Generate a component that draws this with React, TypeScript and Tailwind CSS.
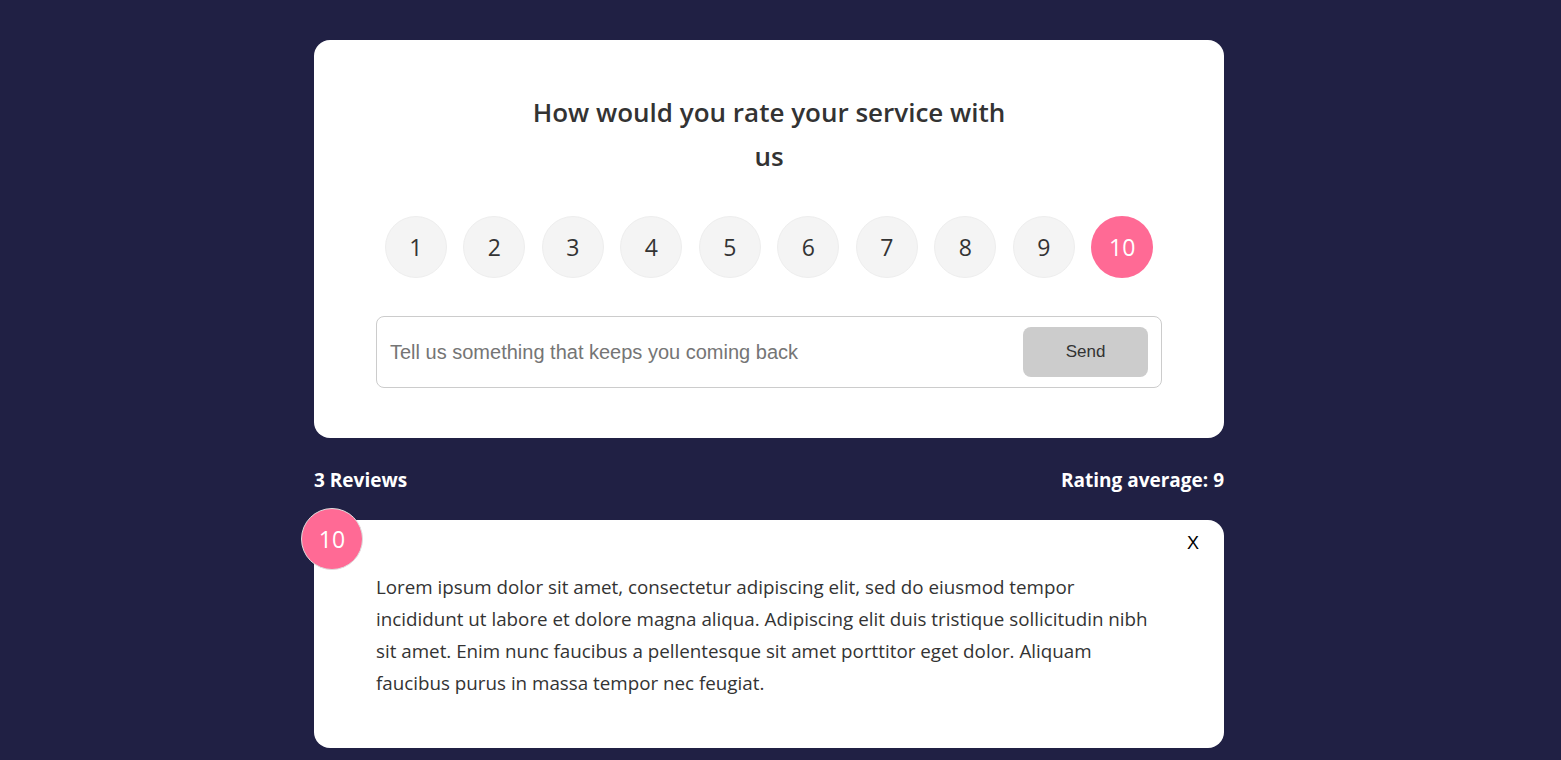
import React from "react";

const reviews = [
  {
    rating: 10,
    text: "Lorem ipsum dolor sit amet, consectetur adipiscing elit, sed do eiusmod tempor incididunt ut labore et dolore magna aliqua. Adipiscing elit duis tristique sollicitudin nibh sit amet. Enim nunc faucibus a pellentesque sit amet porttitor eget dolor. Aliquam faucibus purus in massa tempor nec feugiat.",
  },
  {
    rating: 9,
    text: "Lorem ipsum dolor sit amet, consectetur adipiscing elit, sed do eiusmod tempor incididunt ut labore et dolore magna aliqua. Adipiscing elit duis tristique sollicitudin nibh sit amet.",
  },
  {
    rating: 8,
    text: "Lorem ipsum dolor sit amet, consectetur adipiscing elit, sed do eiusmod tempor incididunt ut labore et dolore magna aliqua.",
  },
];

export default function App() {
  const nums = [1, 2, 3, 4, 5, 6, 7, 8, 9, 10];
  return (
    <div
      className="min-h-screen bg-[#202044] pt-10 pb-10 pr-[23px]"
      style={{ fontFamily: '"Open Sans", "Noto Sans", sans-serif' }}
    >
      <div className="w-[910px] mx-auto">
        <div className="bg-white rounded-2xl pt-[50px] pb-[50px] px-[62px] flex flex-col items-center">
          <h2 className="text-[26px] leading-[44px] font-semibold text-[#333] text-center max-w-[500px]">
            How would you rate your service with us
          </h2>
          <div className="flex gap-[16.5px] mt-[38px]">
            {nums.map((n) => (
              <div
                key={n}
                className={
                  n === 10
                    ? "w-[62px] h-[62px] rounded-full bg-[#ff6a95] text-white flex items-center justify-center text-[23px] font-normal"
                    : "w-[62px] h-[62px] rounded-full bg-[#f4f4f4] border border-[#eeeeee] text-[#333] flex items-center justify-center text-[23px] font-normal"
                }
              >
                {n}
              </div>
            ))}
          </div>
          <div className="mt-[38px] w-full h-[72px] border border-[#cccccc] rounded-lg flex items-center pl-[13px] pr-[13px]">
            <div
              className="flex-1 text-[20px] text-[#757575]"
              style={{ fontFamily: '"Liberation Sans", Arial, sans-serif' }}
            >
              Tell us something that keeps you coming back
            </div>
            <div
              className="w-[125px] h-[50px] rounded-lg bg-[#cccccc] text-[#333] text-[17px] flex items-center justify-center"
              style={{ fontFamily: '"Liberation Sans", Arial, sans-serif' }}
            >
              Send
            </div>
          </div>
        </div>

        <div className="flex justify-between items-center text-white font-bold text-[19px] mt-[30px] mb-[28px] h-[24px]">
          <span>3 Reviews</span>
          <span>Rating average: 9</span>
        </div>

        <div className="flex flex-col gap-[40px]">
          {reviews.map((r, i) => (
            <div key={i} className="relative bg-white rounded-2xl pt-[51px] pb-[49px] px-[62px]">
              <div className="absolute -left-[13px] -top-[12px] w-[62px] h-[62px] rounded-full bg-[#ff6a95] border border-[#dddddd] text-white text-[23px] font-normal flex items-center justify-center">
                {r.rating}
              </div>
              <div
                className="absolute right-[25px] top-[10px] text-[18px] text-black"
                style={{ fontFamily: '"Liberation Sans", Arial, sans-serif' }}
              >
                X
              </div>
              <p className="text-[18.8px] leading-[32px] text-[#333]">{r.text}</p>
            </div>
          ))}
        </div>
      </div>
    </div>
  );
}
